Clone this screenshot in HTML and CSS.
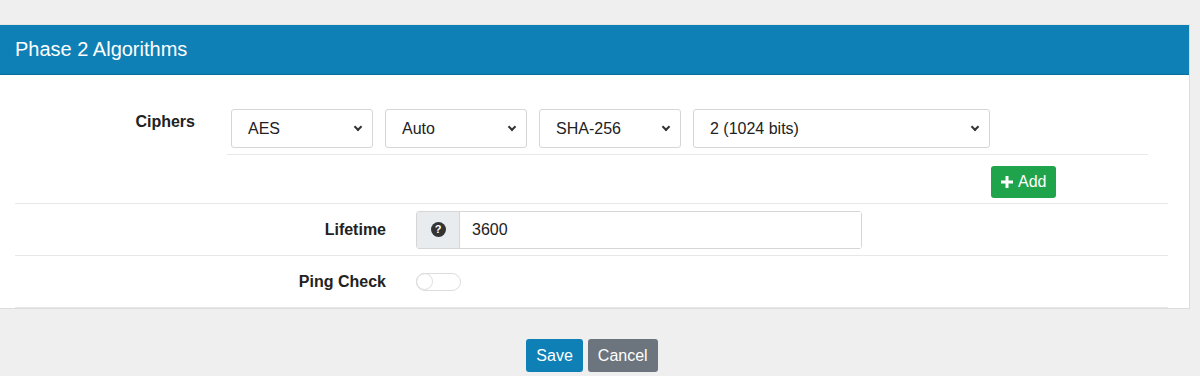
FILE: index.html
```html
<!DOCTYPE html>
<html lang="en">
<head>
  <meta charset="UTF-8" />
  <meta name="viewport" content="width=device-width, initial-scale=1.0" />
  <title>Phase 2 Algorithms</title>
  <link rel="stylesheet" href="styles.css">
</head>
<body>
  <div class="panel">
    <div class="panel-heading">
      <h2>Phase 2 Algorithms</h2>
    </div>
    <div class="panel-body">
      <div class="form-row ciphers-row">
        <label class="ciphers-label">Ciphers</label>
        <div class="ciphers-col">
          <div class="cipher-list">
            <div class="select-wrap narrow">
              <select><option>AES</option></select>
            </div>
            <div class="select-wrap narrow">
              <select><option>Auto</option></select>
            </div>
            <div class="select-wrap narrow">
              <select><option>SHA-256</option></select>
            </div>
            <div class="select-wrap wide">
              <select><option>2 (1024 bits)</option></select>
            </div>
          </div>
          <div class="add-wrap">
            <button class="btn btn-add">
              <svg width="12" height="12" viewBox="0 0 12 12"><path d="M6 0v12M0 6h12" stroke="#fff" stroke-width="3"/></svg>
              Add
            </button>
          </div>
        </div>
      </div>

      <div class="form-row">
        <label class="row-label">Lifetime</label>
        <div class="input-group">
          <span class="addon"><span class="help-icon">?</span></span>
          <input type="text" value="3600" />
        </div>
      </div>

      <div class="form-row">
        <label class="row-label">Ping Check</label>
        <span class="toggle"><span class="knob"></span></span>
      </div>
    </div>
  </div>

  <div class="actions">
    <button class="btn btn-save">Save</button>
    <button class="btn btn-cancel">Cancel</button>
  </div>
</body>
</html>
```

FILE: styles.css
```css
body {
  margin: 0;
  background: #efefef;
  font-family: "Liberation Sans", Arial, sans-serif;
  color: #222;
}

.panel {
  width: 1189px;
  margin-top: 24px;
  background: #fff;
  border-top: 1px solid #e6e6e6;
  border-right: 1px solid #dcdcdc;
  border-bottom: 1px solid #dcdcdc;
}

.panel-heading {
  height: 49px;
  background: #0f80b6;
  border-bottom: 1px solid #0b6f9e;
  display: flex;
  align-items: center;
  padding-left: 15px;
}

.panel-heading h2 {
  margin: 0;
  font-size: 20px;
  font-weight: normal;
  color: #fff;
}

.form-row {
  display: flex;
  align-items: center;
  margin: 0 21px 0 15px;
  height: 51px;
  border-bottom: 1px solid #e8e8e8;
}

.ciphers-row {
  align-items: flex-start;
  height: auto;
  padding-top: 34px;
}

.ciphers-label {
  width: 180px;
  padding-right: 16px;
  text-align: right;
  font-size: 16px;
  font-weight: bold;
  line-height: 24px;
  padding-top: 1px;
}

.ciphers-col {
  margin-left: 16px;
  width: 921px;
}

.cipher-list {
  display: flex;
  gap: 12px;
  padding: 0 0 6px 4px;
  border-bottom: 1px solid #e8e8e8;
}

.select-wrap {
  position: relative;
}

.select-wrap::after {
  content: "";
  position: absolute;
  right: 12px;
  top: 15px;
  width: 4px;
  height: 4px;
  border-right: 2px solid #333;
  border-bottom: 2px solid #333;
  transform: rotate(45deg);
  pointer-events: none;
}

select {
  appearance: none;
  height: 39px;
  border: 1px solid #d6d6d6;
  border-radius: 3px;
  background: #fff;
  padding: 0 16px;
  font-family: inherit;
  font-size: 16px;
  color: #222;
}

.narrow select {
  width: 142px;
}

.wide select {
  width: 297px;
}

.add-wrap {
  padding: 11px 0 5px 764px;
}

.btn {
  border: none;
  border-radius: 3px;
  font-family: inherit;
  font-size: 16px;
  color: #fff;
  height: 33px;
  padding: 0 10px;
}

.btn-add {
  display: flex;
  align-items: center;
  gap: 5px;
  height: 32px;
  background: #20a44b;
}

.row-label {
  width: 371px;
  text-align: right;
  font-size: 16px;
  font-weight: bold;
  margin-right: 30px;
}

.input-group {
  display: flex;
  width: 446px;
  height: 38px;
  border: 1px solid #d6d6d6;
  border-radius: 3px;
  box-sizing: border-box;
}

.addon {
  width: 42px;
  background: #e9ecef;
  border-right: 1px solid #d6d6d6;
  display: flex;
  align-items: center;
  justify-content: center;
}

.help-icon {
  width: 15px;
  height: 15px;
  border-radius: 50%;
  background: #333;
  color: #fff;
  font-size: 11px;
  font-weight: bold;
  line-height: 15px;
  text-align: center;
}

.input-group input {
  flex: 1;
  border: none;
  padding: 0 12px;
  font-family: inherit;
  font-size: 16px;
  color: #222;
  outline: none;
}

.toggle {
  width: 43px;
  height: 16px;
  border: 1.5px solid #ddd;
  border-radius: 10px;
  display: flex;
  align-items: center;
}

.knob {
  width: 15px;
  height: 15px;
  border: 1.5px solid #ddd;
  border-radius: 50%;
  margin-left: -1px;
}

.actions {
  width: 1184px;
  display: flex;
  justify-content: center;
  gap: 5px;
  margin-top: 30px;
}

.btn-save {
  background: #0f80b6;
}

.btn-cancel {
  background: #6c757d;
}
```
